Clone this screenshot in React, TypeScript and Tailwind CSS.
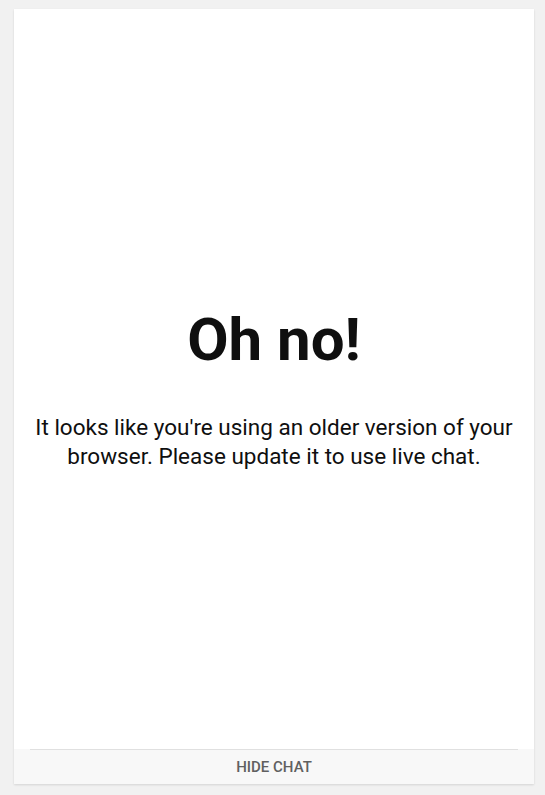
export default function App() {
  return (
    <div className="flex h-[795px] w-full bg-[#f1f1f1] pb-[11px] pl-[14px] pr-[11px] pt-[9px] font-['Roboto',sans-serif]">
      <div className="flex flex-1 flex-col bg-white shadow-[0_1px_2px_rgba(0,0,0,0.12)]">
        <main className="flex flex-1 flex-col items-center justify-center px-4 pt-[17px] text-center text-[#0f0f0f]">
          <h1 className="text-[60px] font-bold leading-[72px]">Oh no!</h1>
          <p className="mt-[37px] text-[22.5px] leading-[29px]">
            It looks like you're using an older version of your
            <br />
            browser. Please update it to use live chat.
          </p>
        </main>
        <footer className="bg-[#f8f8f8] px-4">
          <div className="flex h-[35px] items-center justify-center border-t border-[#e0e0e0]">
            <button className="text-[15px] font-medium uppercase text-[#606060]">
              Hide chat
            </button>
          </div>
        </footer>
      </div>
    </div>
  );
}
